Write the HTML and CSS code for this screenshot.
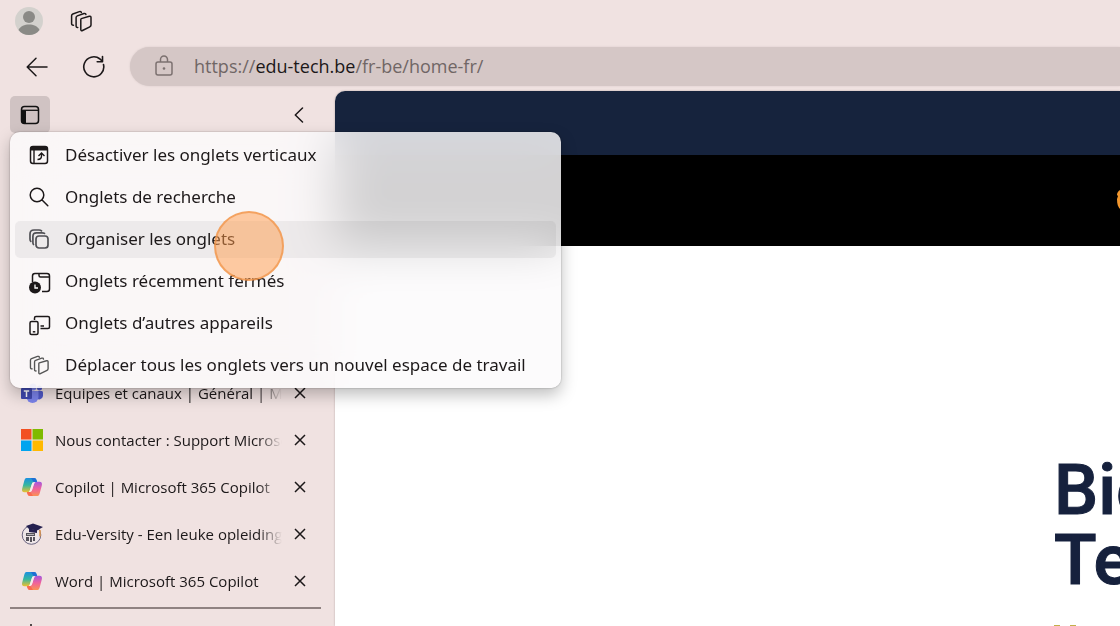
FILE: index.html
```html
<!DOCTYPE html>
<html lang="fr">
<head>
    <meta charset="UTF-8">
    <title>Edu-Tech</title>
    <link rel="stylesheet" href="styles.css">
</head>
<body>
<svg class="defs" width="0" height="0" aria-hidden="true">
    <defs>
        <linearGradient id="cp-a" x1="0" y1="0" x2="0" y2="1">
            <stop offset="0" stop-color="#1b8fe0"/>
            <stop offset=".5" stop-color="#35b7a0"/>
            <stop offset="1" stop-color="#f0c02c"/>
        </linearGradient>
        <linearGradient id="cp-b" x1="0" y1="0" x2="0" y2="1">
            <stop offset="0" stop-color="#a458e0"/>
            <stop offset=".5" stop-color="#f0629c"/>
            <stop offset="1" stop-color="#fb9153"/>
        </linearGradient>
        <symbol id="copilot" viewBox="0 0 22 20">
            <path fill="url(#cp-a)" d="M5.500 1H13c1.500 0 2 .8 2.500 2l.6 2h-2.600c-1.400 0-2.200.7-2.600 2L9 13c-.5 1.500-1.300 2.300-3 2.300H3.500C1.300 15.300.6 13.600 1.200 11.500l2-7.500C3.800 2 4.200 1 5.500 1z"/>
            <path fill="url(#cp-b)" d="M16.500 19H9c-1.500 0-2-.8-2.500-2l-.6-2h2.600c1.400 0 2.200-.7 2.600-2L13 7c.5-1.500 1.300-2.300 3-2.300h2.500c2.200 0 2.900 1.700 2.300 3.800l-2 7.500c-.6 2-1 3-2.300 3z"/>
            <path fill="#1f6fd4" d="M10 1h3c1.500 0 2 .8 2.500 2l.6 2h-2.600c-1 0-1.700-.8-2-1.800z"/>
            <path fill="#fa6a4f" d="M12 19H9c-1.500 0-2-.8-2.500-2l-.6-2h2.600c1 0 1.700.8 2 1.800z"/>
            <path fill="#f6ecec" d="M11.700 5.500h2.300c-.7.500-1 1.200-1.300 2L11 13c-.3.800-.7 1.300-1.300 1.700H7.800c.7-.4 1-1 1.200-1.700l1.900-6c.2-.7.400-1.100.8-1.500z"/>
        </symbol>
        <symbol id="spaces" viewBox="0 0 22 22">
            <g fill="none" stroke="currentColor" stroke-width="1.500" stroke-linejoin="round" stroke-linecap="round">
                <path d="M11.300 8.600l8-2.300c1-.3 1.700.3 1.700 1.200v7.600c0 .8-.4 1.400-1.200 1.700l-7.300 3.700c-1 .5-1.700 0-1.700-1v-9.300c0-.8-.2-1.300.5-1.600z"/>
                <path d="M7.800 17.500c-1 .2-1.700-.4-1.700-1.400V7.600c0-.8.400-1.400 1.200-1.700L14 3.500c1-.3 1.800.1 1.900 1"/>
                <path d="M3.500 15.200c-1 .2-1.900-.4-1.900-1.400V5.700c0-.8.400-1.400 1.200-1.700l6.600-2.400c1-.3 1.800 0 2 .9"/>
            </g>
        </symbol>
        <symbol id="close" viewBox="0 0 12 12">
            <path fill="none" stroke="currentColor" stroke-width="1.500" d="M1 1l10 10M11 1L1 11"/>
        </symbol>
    </defs>
</svg>

<header class="titlebar">
    <button class="avatar" type="button" aria-label="Profil">
        <svg width="28" height="28" viewBox="0 0 28 28">
            <circle cx="14" cy="14" r="14" fill="#d3d1cd"/>
            <circle cx="14" cy="10" r="6" fill="#8a8a86"/>
            <path fill="#8a8a86" d="M3.500 23c2-4 6-5.500 10.500-5.500S22.500 19 24.500 23c-2.500 3.300-6 5-10.500 5s-8-1.700-10.500-5z"/>
        </svg>
    </button>
    <button type="button" aria-label="Espaces de travail"><svg width="22" height="22"><use href="#spaces"/></svg></button>
</header>

<nav class="toolbar">
    <button type="button" aria-label="Retour">
        <svg width="22" height="20" viewBox="0 0 22 20"><path fill="none" stroke="currentColor" stroke-width="1.500" stroke-linecap="round" stroke-linejoin="round" d="M21 10H1.500M10 1.300L1.200 10 10 18.700"/></svg>
    </button>
    <button type="button" aria-label="Actualiser">
        <svg width="24" height="24" viewBox="0 0 24 24"><path fill="none" stroke="currentColor" stroke-width="1.600" stroke-linecap="round" stroke-linejoin="round" d="M21.500 9.500A10 10 0 1 1 18 4l2.300 2.300M20.500 1.500v5.200h-5.300"/></svg>
    </button>
    <div class="address">
        <svg width="18" height="22" viewBox="0 0 18 22">
            <path fill="none" stroke="#7c7170" stroke-width="1.500" d="M3 7h12a2 2 0 0 1 2 2v9a2 2 0 0 1-2 2H3a2 2 0 0 1-2-2V9a2 2 0 0 1 2-2zM5.500 7V4.500a3.500 3.500 0 0 1 7 0V7"/>
            <circle cx="9" cy="13.500" r="1.300" fill="#7c7170"/>
        </svg>
        <a href="#">https://<b>edu-tech.be</b>/fr-be/home-fr/</a>
    </div>
</nav>

<div class="window">
    <aside class="sidebar">
        <div class="actions">
            <button class="toggle" type="button" aria-label="Menu Actions de l'onglet">
                <svg width="20" height="20" viewBox="0 0 20 20">
                    <rect x="1.500" y="1.500" width="17" height="17" rx="3" fill="none" stroke="#111" stroke-width="1.500"/>
                    <path fill="#111" d="M1.500 5.500H6V18.500H4a2.500 2.500 0 0 1-2.500-2.500z"/>
                    <path stroke="#111" stroke-width="1.300" d="M1.500 5.300h17"/>
                </svg>
            </button>
            <button type="button" aria-label="Réduire le volet">
                <svg width="10" height="16" viewBox="0 0 10 16"><path fill="none" stroke="currentColor" stroke-width="1.500" stroke-linecap="round" stroke-linejoin="round" d="M8.500 1L1.300 8l7.200 7"/></svg>
            </button>

            <ul class="menu">
                <li><button type="button">
                    <svg width="20" height="20" viewBox="0 0 20 20">
                        <rect x="1.500" y="1.500" width="17" height="17" rx="2.500" fill="none" stroke="currentColor" stroke-width="1.500"/>
                        <path fill="currentColor" d="M1.500 5.500V3.500a2 2 0 0 1 2-2h13a2 2 0 0 1 2 2v2z"/>
                        <path fill="none" stroke="currentColor" stroke-width="1.400" d="M5 5v13M8.500 14.500c2.500 0 4-1 4-3.500V8.500M9.500 11l3-3 3 3"/>
                    </svg>Désactiver les onglets verticaux</button></li>
                <li><button type="button">
                    <svg width="20" height="20" viewBox="0 0 20 20"><path fill="none" stroke="currentColor" stroke-width="1.500" stroke-linecap="round" d="M12.800 12.800l6 6M14.800 8A6.800 6.800 0 1 1 1.200 8a6.800 6.800 0 0 1 13.600 0z"/></svg>Onglets de recherche</button></li>
                <li><button class="active" type="button">
                    <svg width="20" height="20" viewBox="0 0 20 20"><g fill="none" stroke="#505055" stroke-width="1.700" stroke-linecap="round">
                        <rect x="7" y="7" width="12" height="12" rx="3"/>
                        <path d="M4.500 15.500c-.5-.5-.6-1-.6-2V7.500c0-2.500 1.200-3.700 3.600-3.700h5.500c1.200 0 2 .2 2.500.6"/>
                        <path d="M1.800 12.300C1.200 11.700 1 11 1 10V5c0-2.700 1.300-4 4-4h5c1.200 0 2 .3 2.500.8"/>
                    </g></svg>Organiser les onglets</button></li>
                <li><button type="button">
                    <svg class="low" width="22" height="22" viewBox="0 0 22 22">
                        <path fill="none" stroke="currentColor" stroke-width="1.500" d="M3.500 10V4a2.500 2.500 0 0 1 2.500-2.500h12A2.500 2.500 0 0 1 20.500 4v13a2.500 2.500 0 0 1-2.500 2.500h-5M10 1.500v2A1.500 1.500 0 0 0 11.500 5h9"/>
                        <circle cx="6" cy="15.500" r="6" fill="currentColor"/>
                        <path fill="none" stroke="#fff" stroke-width="1.300" d="M6 12.500v3.500h3"/>
                    </svg>Onglets récemment fermés</button></li>
                <li><button type="button">
                    <svg class="low" width="22" height="22" viewBox="0 0 22 22">
                        <path fill="none" stroke="currentColor" stroke-width="1.500" d="M5.500 6V4A1.500 1.500 0 0 1 7 2.500h12A1.500 1.500 0 0 1 20.500 4v9a1.500 1.500 0 0 1-1.500 1.500h-7.500M11.500 12h3.500"/>
                        <rect x="1" y="7.500" width="8" height="13" rx="1.500" fill="none" stroke="currentColor" stroke-width="1.500"/>
                        <path stroke="currentColor" stroke-width="1.500" d="M3.800 17.800h2.500"/>
                    </svg>Onglets d’autres appareils</button></li>
                <li><button type="button"><svg class="soft" width="20" height="20"><use href="#spaces"/></svg>Déplacer tous les onglets vers un nouvel espace de travail</button></li>
            </ul>
            <span class="pointer"></span>
        </div>

        <ul class="tabs">
            <li>
                <svg width="22" height="20" viewBox="0 0 22 20">
                    <circle cx="12" cy="4" r="3.500" fill="#7b83eb"/><circle cx="18.500" cy="5" r="2.500" fill="#5059c9"/>
                    <path fill="#5059c9" d="M15 8h5.500c.8 0 1.500.6 1.500 1.500V13a4 4 0 0 1-7 2z"/>
                    <path fill="#7b83eb" d="M7 8h9.500c.6 0 1 .4 1 1v5a6 6 0 0 1-12 0z"/>
                    <rect y="5" width="11" height="11" rx="1" fill="#4049b0"/>
                    <path fill="none" stroke="#fff" stroke-width="1.500" d="M2.800 8h5.400M5.500 8v6"/>
                </svg>
                <span>Equipes et canaux | Général | Microsoft</span>
                <button type="button" aria-label="Fermer"><svg width="12" height="12"><use href="#close"/></svg></button>
            </li>
            <li>
                <svg width="22" height="22" viewBox="0 0 22 22">
                    <path fill="#f25022" d="M0 0h10.500v10.500H0z"/><path fill="#7fba00" d="M11.500 0H22v10.500H11.500z"/>
                    <path fill="#00a4ef" d="M0 11.500h10.500V22H0z"/><path fill="#ffb900" d="M11.500 11.500H22V22H11.500z"/>
                </svg>
                <span>Nous contacter : Support Microsoft</span>
                <button type="button" aria-label="Fermer"><svg width="12" height="12"><use href="#close"/></svg></button>
            </li>
            <li>
                <svg width="22" height="20"><use href="#copilot"/></svg>
                <span>Copilot | Microsoft 365 Copilot</span>
                <button type="button" aria-label="Fermer"><svg width="12" height="12"><use href="#close"/></svg></button>
            </li>
            <li>
                <svg width="22" height="22" viewBox="0 0 22 22">
                    <circle cx="10.500" cy="12" r="9.300" fill="#eee6e8" stroke="#6b6580"/>
                    <path fill="none" stroke="#e0964a" stroke-width="1.500" d="M19 7v6.500"/>
                    <path fill="#25204f" d="M5 3l7-2.500L22 4l-6 3.500L8 6z"/><path fill="#25204f" d="M8 5.500l8 1.500v3l-8-1z"/>
                    <path fill="#55525a" d="M5 10h9v3H5zM5 14h3v4H5zM9 14h2v5H9zM12 14h2v4h-2z"/>
                    <path stroke="#ddd" stroke-width=".7" d="M6 11.500h7"/>
                </svg>
                <span>Edu-Versity - Een leuke opleiding</span>
                <button type="button" aria-label="Fermer"><svg width="12" height="12"><use href="#close"/></svg></button>
            </li>
            <li>
                <svg width="22" height="20"><use href="#copilot"/></svg>
                <span>Word | Microsoft 365 Copilot</span>
                <button type="button" aria-label="Fermer"><svg width="12" height="12"><use href="#close"/></svg></button>
            </li>
        </ul>
        <button class="new-tab" type="button" aria-label="Nouvel onglet">
            <svg width="18" height="18" viewBox="0 0 18 18"><path stroke="currentColor" stroke-width="1.500" d="M9 0v18M0 9h18"/></svg>
        </button>
    </aside>

    <main class="page">
        <div class="topline"></div>
        <div class="brandbar">
            <svg width="4" height="24" viewBox="0 0 4 24"><path fill="#f0962e" d="M4 1C2 2 1 4 1 6l1 1-1 3c0 5 1 8 3 10z"/></svg>
        </div>
        <section class="hero">
            <h1>Bie<br>Te</h1>
            <div class="accent"><i></i><i></i></div>
        </section>
    </main>
</div>
</body>
</html>
```
FILE: styles.css
```css
*{
    margin: 0;
    padding: 0;
    box-sizing: border-box;
}
body{
    display: flex;
    flex-direction: column;
    height: 100vh;
    overflow: hidden;
    background: #f0e2e1;
    color: #1c1819;
    font: 15px/24px "Open Sans", "Noto Sans", sans-serif;
}
ul{
    list-style: none;
}
button{
    display: flex;
    align-items: center;
    justify-content: center;
    border: 0;
    background: none;
    color: inherit;
    font: inherit;
}
svg{
    display: block;
    flex: none;
}
.defs{
    position: absolute;
}

/* browser bars */
.titlebar{
    display: flex;
    flex: none;
    align-items: center;
    gap: 27px;
    height: 42px;
    padding-left: 15px;
}
.toolbar{
    display: flex;
    flex: none;
    align-items: center;
    gap: 34px;
    height: 49px;
    padding-left: 26px;
}
.address{
    display: flex;
    flex: 1;
    align-items: center;
    gap: 21px;
    height: 39px;
    margin-left: -10px;
    padding: 0 0 2px 25px;
    border-radius: 20px 0 0 20px;
    background: #d5c7c6;
    box-shadow: 0 0 2px #d5c7c6;
}
.address a{
    color: #706665;
    font-size: 18px;
    text-decoration: none;
}
.address b{
    color: #1c1819;
    font-weight: 400;
}

.window{
    display: flex;
    flex: 1;
    min-height: 0;
}
.sidebar{
    display: flex;
    flex: none;
    flex-direction: column;
    width: 335px;
    padding: 5px 14px 0 10px;
}
.actions{
    position: relative;
    z-index: 1;
    display: flex;
    align-items: center;
    justify-content: space-between;
    height: 37px;
    padding-right: 17px;
}
.toggle{
    width: 40px;
    height: 37px;
    border-radius: 5px;
    background: #d0c3c3;
}

/* tab actions menu */
.menu{
    position: absolute;
    top: 36px;
    left: 0;
    display: flex;
    flex-direction: column;
    gap: 5px;
    padding: 5px 5px 4px;
    border-radius: 10px;
    background: rgba(252, 250, 251, .84);
    box-shadow: 0 0 2px rgba(0, 0, 0, .35), 0 7px 16px rgba(0, 0, 0, .25);
    -webkit-backdrop-filter: blur(24px);
    backdrop-filter: blur(24px);
}
.menu button{
    justify-content: flex-start;
    gap: 16px;
    width: 100%;
    height: 37px;
    padding: 0 30px 2px 14px;
    border-radius: 5px;
    font-family: "Noto Sans", "Open Sans", sans-serif;
    font-size: 17px;
    white-space: nowrap;
}
.menu svg{
    width: 20px;
}
.menu .low{
    width: 22px;
    margin: 5px -2px 0 0;
}
.menu .soft{
    color: #555;
}
.menu .active{
    background: rgba(0, 0, 0, .05);
}
.pointer{
    position: absolute;
    top: 115px;
    left: 204px;
    width: 70px;
    height: 70px;
    border: 2px solid rgba(240, 150, 75, .75);
    border-radius: 50%;
    background: rgba(255, 155, 75, .5);
}

/* vertical tabs */
.tabs{
    padding: 236px 0 3px;
    border-bottom: 2px solid #8f8281;
}
.tabs li{
    display: flex;
    align-items: center;
    gap: 12px;
    height: 47px;
    padding: 0 15px 0 11px;
}
.tabs span{
    flex: 1;
    overflow: hidden;
    white-space: nowrap;
    -webkit-mask-image: linear-gradient(to left, transparent, #000 24px);
    mask-image: linear-gradient(to left, transparent, #000 24px);
}
.new-tab{
    align-self: flex-start;
    margin: 15px 0 0 12px;
}

/* web page */
.page{
    flex: 1;
    min-width: 0;
    overflow: hidden;
    border-radius: 10px 0 0 0;
    background: #fff;
    box-shadow: 0 0 2px rgba(80, 60, 60, .4);
}
.topline{
    height: 64px;
    background: #16233d;
}
.brandbar{
    display: flex;
    align-items: center;
    justify-content: flex-end;
    height: 91px;
    background: #000;
}
.hero{
    padding: 209px 0 0 719px;
}
.hero h1{
    color: #16213d;
    font: 500 70px/70px Roboto, sans-serif;
    -webkit-text-stroke: 1px #16213d;
}
.accent{
    display: flex;
    gap: 10px;
    padding-top: 30px;
}
.accent i{
    width: 6px;
    height: 4px;
    background: #c3b04a;
}
```
